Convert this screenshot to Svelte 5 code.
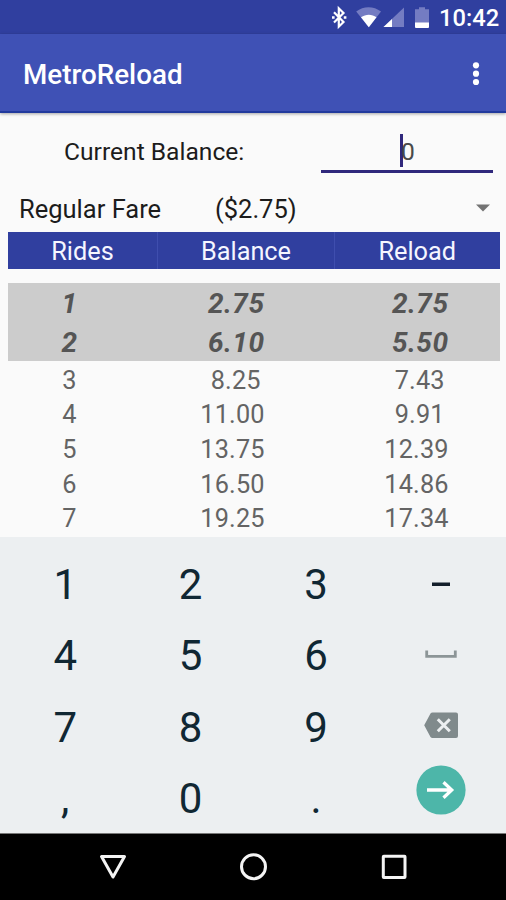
<script>
  const rows = [
    { rides: '1', balance: ' 2.75', reload: ' 2.75', owned: true },
    { rides: '2', balance: ' 6.10', reload: ' 5.50', owned: true },
    { rides: '3', balance: ' 8.25', reload: ' 7.43' },
    { rides: '4', balance: '11.00', reload: ' 9.91' },
    { rides: '5', balance: '13.75', reload: '12.39' },
    { rides: '6', balance: '16.50', reload: '14.86' },
    { rides: '7', balance: '19.25', reload: '17.34' }
  ];
  const keys = ['1', '2', '3', 'minus', '4', '5', '6', 'space', '7', '8', '9', 'delete', ',', '0', '.', 'go'];
</script>

<div class="screen">
  <div class="status">
    <svg width="110" height="34" viewBox="0 0 110 34">
      <path d="M4 12.300 13.500 22l-4.700 4.700V8.300l4.700 4.700L4 22.500" fill="none" stroke="#fff" stroke-width="2.200" />
      <path d="M2 16.200h2.600v2.600H2zM13.800 16.200h2.600v2.600h-2.600z" fill="#fff" />
      <path d="M26.200 11.6C33.500 5.8 43.500 5.8 51 11.600L38.800 27.200z" fill="#747cc2" />
      <path d="M31 17.200c4.800-3.400 10.900-3.400 15.500 0l-7.700 10z" fill="#fff" />
      <path d="M53.500 27 74 7.500V27z" fill="#747cc2" />
      <path d="M53.500 27 62 19v8z" fill="#fff" />
      <path d="M85 9.200h4V7.200h6v2h4V23H85z" fill="#747cc2" />
      <path d="M85 22.600h14V27q0 1-1 1H86q-1 0-1-1z" fill="#fff" />
    </svg>
    <span class="clock">10:42</span>
  </div>

  <header>
    <h1>MetroReload</h1>
    <svg width="12" height="28" viewBox="0 0 12 28" fill="#fff">
      <circle cx="6" cy="5.300" r="3.100" /><circle cx="6" cy="13.700" r="3.100" /><circle cx="6" cy="22" r="3.100" />
    </svg>
  </header>

  <main>
    <div class="balance">
      <span class="label">Current Balance:</span>
      <div class="field"><i class="caret"></i><span>0</span></div>
    </div>
    <div class="fare">
      <span class="fare-name">Regular Fare</span>
      <span class="fare-price">($2.75)</span>
      <svg width="14" height="8" viewBox="0 0 14 8"><path d="M0 .5h14L7 7.500z" fill="#737373" /></svg>
    </div>
    <div class="head">
      <span>Rides</span><span>Balance</span><span>Reload</span>
    </div>
    <div class="rows">
      {#each rows as row}
        <div class="row" class:owned={row.owned}>
          <span>{row.rides}</span><span>{row.balance}</span><span>{row.reload}</span>
        </div>
      {/each}
    </div>
  </main>

  <div class="keypad">
    {#each keys as key}
      <div class="key">
        {#if key === 'minus'}
          <svg width="50" height="50" viewBox="0 0 50 50"><path d="M16 23.500h18v3.500H16z" fill="#131f2b" /></svg>
        {:else if key === 'space'}
          <svg width="50" height="50" viewBox="0 0 50 50"><path d="M10.700 20.500v5.800h28.600v-5.800" fill="none" stroke="#8c9597" stroke-width="2.800" /></svg>
        {:else if key === 'delete'}
          <svg width="50" height="50" viewBox="0 0 50 50">
            <path d="M16.500 10.500H40q2 0 2 2V34q0 2-2 2H16.500q-1.300 0-2-1L8.200 23.200l6.300-11.700q.7-1 2-1z" fill="#808a8c" />
            <path d="m21.800 17.300 12 12m0-12-12 12" stroke="#eceff1" stroke-width="3" />
          </svg>
        {:else if key === 'go'}
          <svg class="go" width="50" height="50" viewBox="0 0 50 50">
            <circle cx="25" cy="25" r="24.600" fill="#4db6a9" />
            <path d="M11 25h25M27.500 17.300l8.200 7.700-8.200 7.700" fill="none" stroke="#fff" stroke-width="3.300" />
          </svg>
        {:else}
          <span>{key}</span>
        {/if}
      </div>
    {/each}
  </div>

  <nav>
    <svg width="28" height="28" viewBox="0 0 28 28"><path d="M2.500 3.500h23L14 24z" /></svg>
    <svg width="28" height="28" viewBox="0 0 28 28"><circle cx="13.500" cy="13.700" r="12" /></svg>
    <svg width="28" height="28" viewBox="0 0 28 28"><rect x="3.300" y="3.300" width="21.700" height="21.200" rx=".5" /></svg>
  </nav>
</div>

<style>
  .screen {
    width: 506px;
    height: 900px;
    display: flex;
    flex-direction: column;
    overflow: hidden;
    background: #fafafa;
    font-family: Roboto, "Liberation Sans", sans-serif;
    font-size: 25.300px;
    color: #1c1c1c;
  }
  .status {
    flex: none;
    height: 34px;
    display: flex;
    justify-content: flex-end;
    padding-right: 10px;
    background: #303f9f;
    color: #fff;
  }
  .status svg { margin-right: -1px; }
  .clock { font-size: 23.700px; font-weight: 500; line-height: 36px; width: 57px; white-space: nowrap; }
  header {
    flex: none;
    position: relative;
    height: 79px;
    box-sizing: border-box;
    display: flex;
    align-items: center;
    justify-content: space-between;
    padding: 2px 24px 0 23px;
    background: #3f51b5;
    border-bottom: 2px solid #213a9d;
    box-shadow: 0 1px 3px rgba(0, 0, 0, .35);
    color: #fff;
  }
  h1 { margin: 3px 0 0; font-size: 27.800px; font-weight: 500; line-height: 34px; }
  main { flex: none; height: 424px; padding: 0 6.500px 0 8px; }
  .balance { height: 72px; display: flex; justify-content: space-between; font-size: 24.600px; }
  .label { margin-left: 56px; line-height: 78px; }
  .field {
    width: 172px;
    height: 60px;
    margin-right: 7px;
    box-sizing: border-box;
    border-bottom: 3px solid #30287c;
    display: flex;
    justify-content: center;
    line-height: 78px;
    color: #4a4a4a;
  }
  .caret { width: 3px; height: 33px; margin: 21px -2px 0 2px; background: #30287c; }
  .fare { height: 46.500px; display: flex; align-items: center; line-height: 46px; font-size: 25.500px; }
  .fare-name { width: 196px; margin: 2px 0 0 11px; }
  .fare-price { flex: 1; margin-top: 2px; }
  .fare svg { margin-right: 10px; }
  .head {
    height: 37px;
    display: flex;
    background: #303f9f;
    color: #f5f6ff;
    line-height: 40px;
    text-align: center;
  }
  .head span { box-sizing: border-box; width: 149px; }
  .head span:nth-child(2) { width: 178px; border: solid #3f4eae; border-width: 0 1px; }
  .head span:nth-child(3) { flex: 1; }
  .rows { margin-top: 14px; }
  .row {
    height: 34.700px;
    display: flex;
    line-height: 39px;
    letter-spacing: .2px;
    white-space: pre;
    text-align: center;
    color: #646464;
  }
  .row span { width: 123px; }
  .row span:nth-child(2) { width: 203px; }
  .row span:nth-child(3) { width: 165px; }
  .owned {
    height: 39px;
    background: #ccc;
    color: #555;
    font-size: 28px;
    font-weight: 700;
    font-style: italic;
    line-height: 42px;
    letter-spacing: .5px;
  }
  .keypad {
    flex: none;
    height: 296px;
    box-sizing: border-box;
    padding: 12px 2px 0 2.500px;
    display: grid;
    grid-template-columns: repeat(4, 125.400px);
    grid-template-rows: repeat(4, 71.300px);
    background: #eceff1;
    color: #102733;
    font-size: 42px;
  }
  .key { display: flex; align-items: center; justify-content: center; }
  .key svg { margin-top: -1px; }
  .key .go { margin-top: -18px; }
  nav {
    flex: 1;
    display: flex;
    justify-content: space-between;
    padding: 19px 98px 0 99px;
    background: #000;
    border-top: 1px solid #777;
  }
  nav svg { fill: none; stroke: #f4f4f4; stroke-width: 3; stroke-linejoin: round; }
</style>
